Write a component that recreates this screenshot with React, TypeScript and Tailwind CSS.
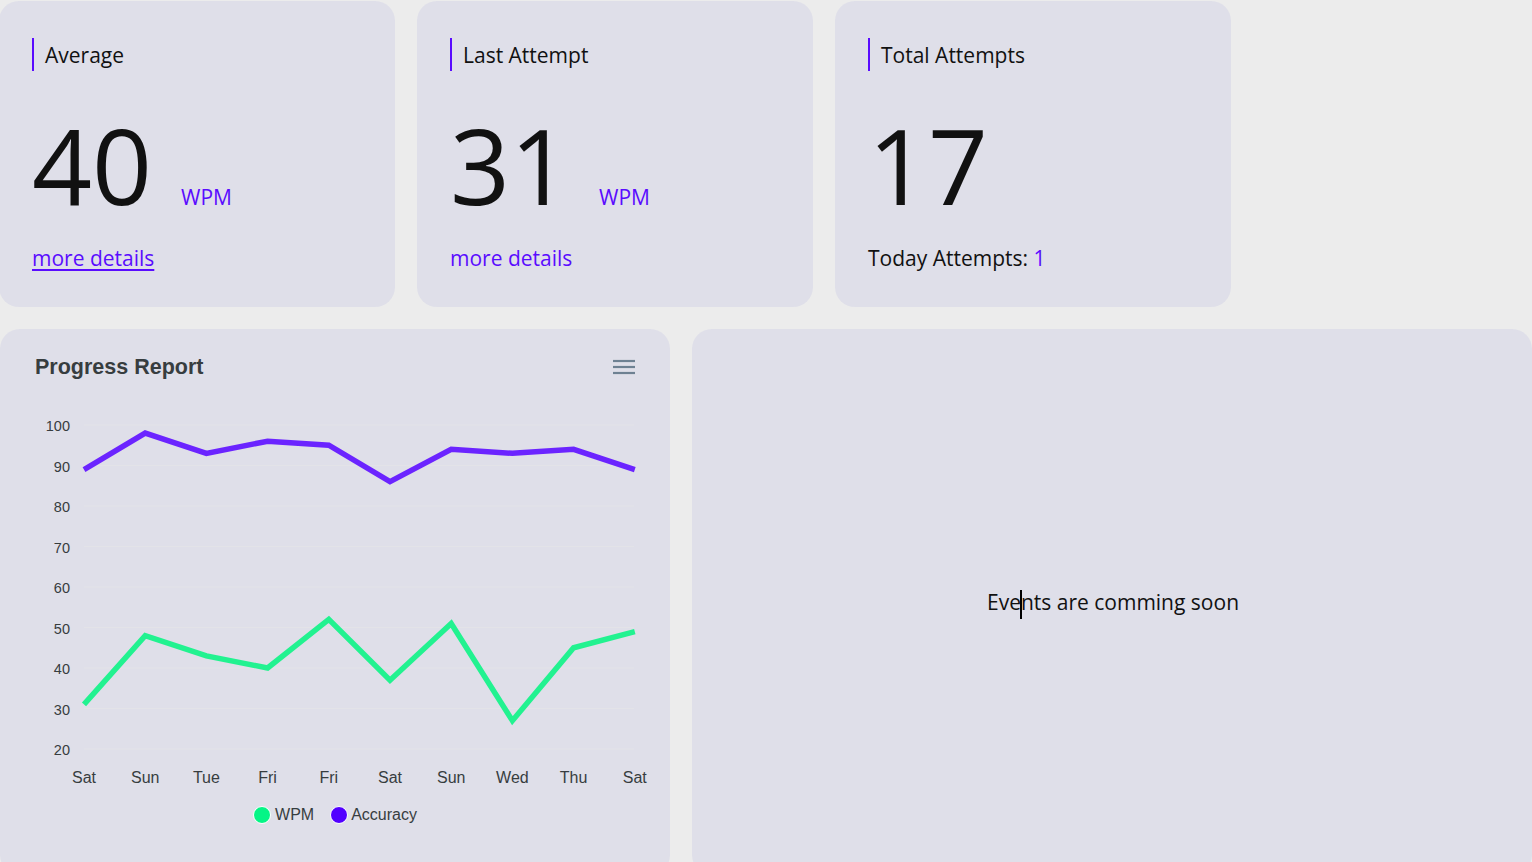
const days = ['Sat', 'Sun', 'Tue', 'Fri', 'Fri', 'Sat', 'Sun', 'Wed', 'Thu', 'Sat']
const wpm = [31, 48, 43, 40, 52, 37, 51, 27, 45, 49]
const accuracy = [89, 98, 93, 96, 95, 86, 94, 93, 94, 89]
const ticks = [100, 90, 80, 70, 60, 50, 40, 30, 20]

const px = (i: number) => 84 + i * 61.2
const py = (v: number) => 370 - (v - 20) * 4.05
const points = (data: number[]) => data.map((v, i) => `${px(i)},${py(v)}`).join(' ')

const StatCard = ({
	title,
	value,
	unit,
	footer,
}: {
	title: string
	value: string
	unit?: string
	footer: React.ReactNode
}) => (
	<div className="w-[396px] h-[306px] shrink-0 rounded-[20px] bg-[#dfdfe9] pt-[37px] pl-[33px] text-[#111]">
		<div className="flex items-center h-[33px] border-l-2 border-[#5a0cff] pl-[11px] text-[21px]">
			<span className="translate-y-px">{title}</span>
		</div>
		<div className="flex items-baseline mt-[41px] h-[105px]">
			<span className="w-[149px] text-[105px] leading-none tabular-nums">{value}</span>
			{unit && <span className="text-[21px] text-[#5a0cff]">{unit}</span>}
		</div>
		<div className="mt-[26px] text-[21px] leading-[30px]">{footer}</div>
	</div>
)

const ProgressChart = () => (
	<div className="w-[670px] h-[546px] shrink-0 rounded-[20px] bg-[#dfdfe9] pt-[26px] font-['Liberation_Sans',Arial,sans-serif] text-[#373d3f]">
		<div className="flex items-center justify-between h-[24px] px-[35px]">
			<h2 className="text-[21.5px] font-bold">Progress Report</h2>
			<svg width="22" height="16" viewBox="0 0 22 16">
				<g stroke="#6e8192" strokeWidth="2.2">
					<line x1="0" y1="2" x2="22" y2="2" />
					<line x1="0" y1="8" x2="22" y2="8" />
					<line x1="0" y1="14" x2="22" y2="14" />
				</g>
			</svg>
		</div>
		<svg width="670" height="412" className="block">
			{ticks.map((t) => (
				<g key={t}>
					<line x1={84} x2={634} y1={py(t)} y2={py(t)} stroke="#e3e3e8" strokeWidth="1" />
					<text x={70} y={py(t) + 1} textAnchor="end" dominantBaseline="central" fontSize="14.5" fill="#373d3f">
						{t}
					</text>
				</g>
			))}
			{days.map((d, i) => (
				<text key={i} x={px(i)} y={398} textAnchor="middle" dominantBaseline="central" fontSize="16" fill="#373d3f">
					{d}
				</text>
			))}
			<polyline points={points(accuracy)} fill="none" stroke="#6b24ff" strokeWidth="5.5" />
			<polyline points={points(wpm)} fill="none" stroke="#22f290" strokeWidth="5.5" />
		</svg>
		<div className="flex justify-center items-center gap-[16px] mt-[14px] text-[16px] leading-[20px]">
			<div className="flex items-center gap-[4px]">
				<span className="w-[18px] h-[18px] rounded-full bg-[#05f586] border border-white" />
				<span>WPM</span>
			</div>
			<div className="flex items-center gap-[3px]">
				<span className="w-[18px] h-[18px] rounded-full bg-[#5200ff] border border-white" />
				<span>Accuracy</span>
			</div>
		</div>
	</div>
)

export default function App() {
	return (
		<div className="min-h-screen overflow-hidden bg-[#ececec] pt-px font-['Open_Sans','Noto_Sans',sans-serif]">
			<div className="flex gap-[22px] -ml-px">
				<StatCard
					title="Average"
					value="40"
					unit="WPM"
					footer={
						<a href="#" className="text-[#5a0cff] underline underline-offset-[3px]">
							more details
						</a>
					}
				/>
				<StatCard
					title="Last Attempt"
					value="31"
					unit="WPM"
					footer={<a href="#" className="text-[#5a0cff]">more details</a>}
				/>
				<StatCard
					title="Total Attempts"
					value="17"
					footer={
						<span>
							Today Attempts: <span className="text-[#5a0cff]">1</span>
						</span>
					}
				/>
			</div>
			<div className="flex gap-[22px] mt-[22px]">
				<ProgressChart />
				<div className="flex-1 h-[546px] rounded-[20px] bg-[#dfdfe9] flex items-center justify-center text-[21px] text-[#111]">
					<p className="translate-x-px translate-y-px">
						Eve
						<span className="inline-block align-middle w-[2px] h-[29px] -mx-px bg-black" />
						nts are comming soon
					</p>
				</div>
			</div>
		</div>
	)
}
